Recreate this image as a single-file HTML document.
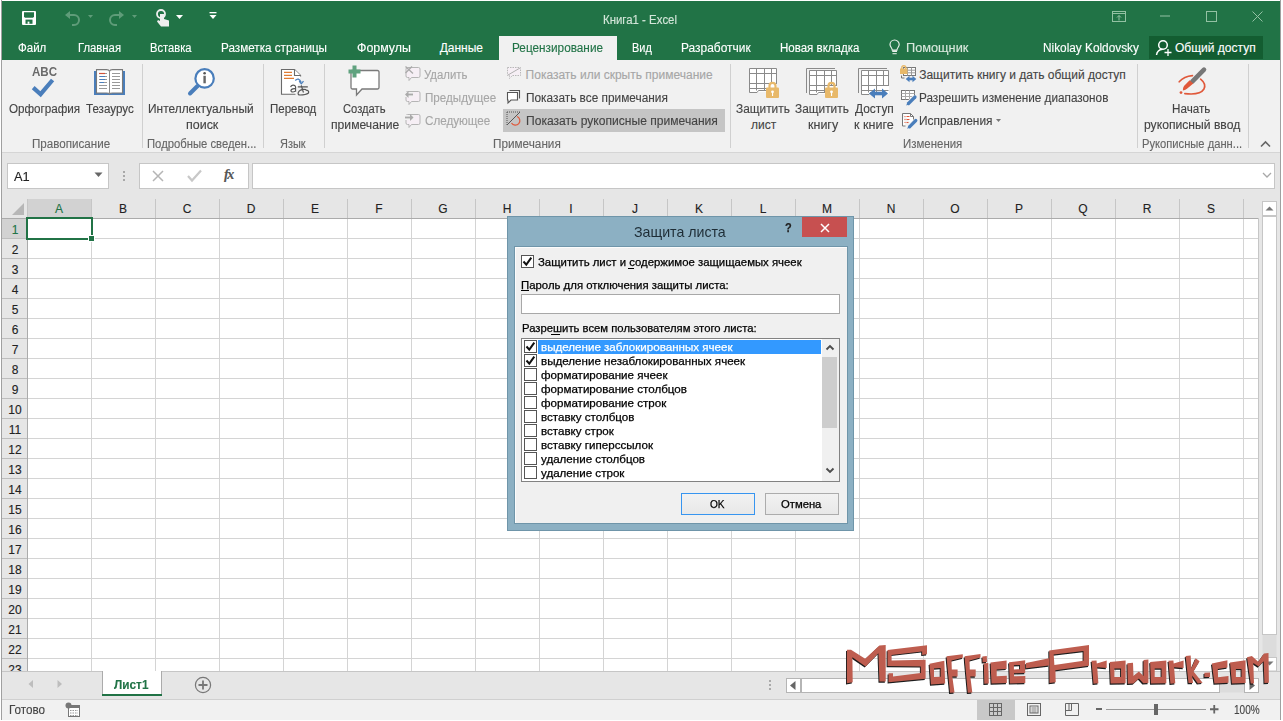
<!DOCTYPE html><html><head><meta charset="utf-8"><style>
html,body{margin:0;padding:0;width:1283px;height:721px;overflow:hidden;background:#fff;}
body{position:relative;font-family:"Liberation Sans",sans-serif;}
.r{position:absolute;}
.t{position:absolute;white-space:nowrap;transform-origin:0 0;-webkit-text-stroke:0.12px currentColor;}
.dlg .t{-webkit-text-stroke:0.25px currentColor;}
svg{position:absolute;overflow:visible;}
</style></head><body>
<div class="r" style="left:0px;top:0px;width:1283px;height:721px;background:#ffffff;"></div>
<div class="r" style="left:1px;top:1px;width:1280px;height:720px;background:#e6e6e6;"></div>
<div class="r" style="left:2px;top:1px;width:1278px;height:59px;background:#217346;"></div>
<div class="r" style="left:499px;top:36px;width:118px;height:24px;background:#f1f1f1;"></div>
<div class="r" style="left:2px;top:60px;width:1278px;height:92px;background:#f1f1f1;"></div>
<div class="r" style="left:2px;top:152px;width:1278px;height:1px;background:#d5d5d5;"></div>
<div class="r" style="left:2px;top:153px;width:1278px;height:46px;background:#e6e6e6;"></div>
<div class="r" style="left:1px;top:0px;width:1px;height:721px;background:#a0a0a0;"></div>
<div class="r" style="left:1280px;top:0px;width:1px;height:721px;background:#a0a0a0;"></div>
<div class="r" style="left:0px;top:720px;width:1283px;height:1px;background:#ffffff;"></div>
<div class="t" id="t0" style="left:602.50px;top:13.94px;font-size:12px;line-height:12px;color:#d3e6d9;transform:scaleX(0.9509);">Книга1 - Excel</div>
<div class="t" id="t1" style="left:18.30px;top:41.84px;font-size:12px;line-height:12px;color:#ffffff;transform:scaleX(0.9587);">Файл</div>
<div class="t" id="t2" style="left:77.50px;top:41.84px;font-size:12px;line-height:12px;color:#ffffff;transform:scaleX(0.9417);">Главная</div>
<div class="t" id="t3" style="left:150.40px;top:41.84px;font-size:12px;line-height:12px;color:#ffffff;transform:scaleX(0.9297);">Вставка</div>
<div class="t" id="t4" style="left:221.40px;top:41.84px;font-size:12px;line-height:12px;color:#ffffff;transform:scaleX(0.9739);">Разметка страницы</div>
<div class="t" id="t5" style="left:356.90px;top:41.84px;font-size:12px;line-height:12px;color:#ffffff;transform:scaleX(1.0326);">Формулы</div>
<div class="t" id="t6" style="left:439.70px;top:41.84px;font-size:12px;line-height:12px;color:#ffffff;">Данные</div>
<div class="t" id="t7" style="left:632.20px;top:41.84px;font-size:12px;line-height:12px;color:#ffffff;transform:scaleX(0.9116);">Вид</div>
<div class="t" id="t8" style="left:681.00px;top:41.84px;font-size:12px;line-height:12px;color:#ffffff;transform:scaleX(0.9946);">Разработчик</div>
<div class="t" id="t9" style="left:780.30px;top:41.84px;font-size:12px;line-height:12px;color:#ffffff;transform:scaleX(0.9596);">Новая вкладка</div>
<div class="t" id="t10" style="left:512.20px;top:41.84px;font-size:12px;line-height:12px;color:#217346;transform:scaleX(0.9823);">Рецензирование</div>
<div class="t" id="t11" style="left:906.40px;top:41.84px;font-size:12px;line-height:12px;color:#d8e8dc;transform:scaleX(1.0623);">Помощник</div>
<div class="t" id="t12" style="left:1042.80px;top:41.84px;font-size:12px;line-height:12px;color:#ffffff;transform:scaleX(0.9848);">Nikolay Koldovsky</div>
<div class="r" style="left:1149px;top:36px;width:114px;height:23px;background:#135d31;"></div>
<div class="t" id="t13" style="left:1175.00px;top:41.84px;font-size:12px;line-height:12px;color:#ffffff;">Общий доступ</div>
<div class="t" id="t14" style="left:8.60px;top:102.84px;font-size:12px;line-height:12px;color:#444444;transform:scaleX(0.9703);">Орфография</div>
<div class="t" id="t15" style="left:85.70px;top:102.84px;font-size:12px;line-height:12px;color:#444444;transform:scaleX(0.9660);">Тезаурус</div>
<div class="t" id="t16" style="left:148.10px;top:102.84px;font-size:12px;line-height:12px;color:#444444;transform:scaleX(0.9932);">Интеллектуальный</div>
<div class="t" id="t17" style="left:185.60px;top:118.84px;font-size:12px;line-height:12px;color:#444444;transform:scaleX(1.0385);">поиск</div>
<div class="t" id="t18" style="left:269.60px;top:102.84px;font-size:12px;line-height:12px;color:#444444;transform:scaleX(0.9586);">Перевод</div>
<div class="t" id="t19" style="left:343.40px;top:102.84px;font-size:12px;line-height:12px;color:#444444;transform:scaleX(0.9320);">Создать</div>
<div class="t" id="t20" style="left:330.70px;top:118.84px;font-size:12px;line-height:12px;color:#444444;transform:scaleX(1.0131);">примечание</div>
<div class="t" id="t21" style="left:736.00px;top:102.84px;font-size:12px;line-height:12px;color:#444444;transform:scaleX(0.9886);">Защитить</div>
<div class="t" id="t22" style="left:751.00px;top:118.84px;font-size:12px;line-height:12px;color:#444444;">лист</div>
<div class="t" id="t23" style="left:794.90px;top:102.84px;font-size:12px;line-height:12px;color:#444444;transform:scaleX(0.9886);">Защитить</div>
<div class="t" id="t24" style="left:807.80px;top:118.84px;font-size:12px;line-height:12px;color:#444444;transform:scaleX(1.0421);">книгу</div>
<div class="t" id="t25" style="left:854.80px;top:102.84px;font-size:12px;line-height:12px;color:#444444;transform:scaleX(0.9933);">Доступ</div>
<div class="t" id="t26" style="left:854.30px;top:118.84px;font-size:12px;line-height:12px;color:#444444;transform:scaleX(1.0453);">к книге</div>
<div class="t" id="t27" style="left:1172.40px;top:102.84px;font-size:12px;line-height:12px;color:#444444;transform:scaleX(0.9701);">Начать</div>
<div class="t" id="t28" style="left:1143.80px;top:118.84px;font-size:12px;line-height:12px;color:#444444;transform:scaleX(1.0116);">рукописный ввод</div>
<div class="t" id="t29" style="left:32.30px;top:137.84px;font-size:12px;line-height:12px;color:#666666;transform:scaleX(0.9683);">Правописание</div>
<div class="t" id="t30" style="left:146.70px;top:137.84px;font-size:12px;line-height:12px;color:#666666;transform:scaleX(0.9402);">Подробные сведен...</div>
<div class="t" id="t31" style="left:280.00px;top:137.84px;font-size:12px;line-height:12px;color:#666666;transform:scaleX(0.9097);">Язык</div>
<div class="t" id="t32" style="left:492.50px;top:137.84px;font-size:12px;line-height:12px;color:#666666;transform:scaleX(0.9784);">Примечания</div>
<div class="t" id="t33" style="left:903.20px;top:137.84px;font-size:12px;line-height:12px;color:#666666;transform:scaleX(0.9540);">Изменения</div>
<div class="t" id="t34" style="left:1141.90px;top:137.84px;font-size:12px;line-height:12px;color:#666666;transform:scaleX(0.9315);">Рукописные данн...</div>
<div class="r" style="left:503px;top:109px;width:222px;height:23px;background:#c5c5c5;"></div>
<div class="t" id="t35" style="left:424.40px;top:68.84px;font-size:12px;line-height:12px;color:#a6a6a6;transform:scaleX(0.9468);">Удалить</div>
<div class="t" id="t36" style="left:424.70px;top:91.84px;font-size:12px;line-height:12px;color:#a6a6a6;transform:scaleX(0.9695);">Предыдущее</div>
<div class="t" id="t37" style="left:424.70px;top:114.84px;font-size:12px;line-height:12px;color:#a6a6a6;transform:scaleX(0.9726);">Следующее</div>
<div class="t" id="t38" style="left:525.60px;top:68.84px;font-size:12px;line-height:12px;color:#a6a6a6;">Показать или скрыть примечание</div>
<div class="t" id="t39" style="left:525.60px;top:91.84px;font-size:12px;line-height:12px;color:#444444;transform:scaleX(0.9864);">Показать все примечания</div>
<div class="t" id="t40" style="left:525.60px;top:114.84px;font-size:12px;line-height:12px;color:#444444;transform:scaleX(1.0070);">Показать рукописные примечания</div>
<div class="t" id="t41" style="left:919.20px;top:68.84px;font-size:12px;line-height:12px;color:#444444;">Защитить книгу и дать общий доступ</div>
<div class="t" id="t42" style="left:919.20px;top:91.84px;font-size:12px;line-height:12px;color:#444444;transform:scaleX(0.9797);">Разрешить изменение диапазонов</div>
<div class="t" id="t43" style="left:919.20px;top:114.84px;font-size:12px;line-height:12px;color:#444444;transform:scaleX(0.9919);">Исправления</div>
<div class="r" style="left:142px;top:64px;width:1px;height:84px;background:#d0d0d0;"></div>
<div class="r" style="left:263px;top:64px;width:1px;height:84px;background:#d0d0d0;"></div>
<div class="r" style="left:324px;top:64px;width:1px;height:84px;background:#d0d0d0;"></div>
<div class="r" style="left:730px;top:64px;width:1px;height:84px;background:#d0d0d0;"></div>
<div class="r" style="left:1137px;top:64px;width:1px;height:84px;background:#d0d0d0;"></div>
<div class="r" style="left:1248px;top:64px;width:1px;height:84px;background:#d0d0d0;"></div>
<div class="r" style="left:7px;top:163px;width:102px;height:26px;background:#ffffff;border:1px solid #c6c6c6;box-sizing:border-box;"></div>
<div class="t" id="t44" style="left:14.30px;top:171.04px;font-size:12px;line-height:12px;color:#222;transform:scaleX(1.0680);">A1</div>
<div class="r" style="left:139px;top:163px;width:110px;height:26px;background:#ffffff;border:1px solid #c6c6c6;box-sizing:border-box;"></div>
<div class="r" style="left:252px;top:163px;width:23px;height:26px;background:#ffffff;border:1px solid #c6c6c6;border-right:none;box-sizing:border-box;"></div>
<div class="r" style="left:252px;top:163px;width:1023px;height:26px;background:#ffffff;border:1px solid #c6c6c6;box-sizing:border-box;"></div>
<div class="r" style="left:2px;top:199px;width:1278px;height:20px;background:#e6e6e6;"></div>
<div class="r" style="left:28px;top:219px;width:1230px;height:452px;background:#ffffff;"></div>
<div class="r" style="left:27px;top:199px;width:65px;height:19px;background:#d2d2d2;"></div>
<div class="r" style="left:2px;top:219px;width:25px;height:19px;background:#d2d2d2;"></div>
<div class="r" style="left:27px;top:219px;width:1px;height:452px;background:#ababab;"></div>
<div class="r" style="left:27px;top:199px;width:1px;height:19px;background:#c6c6c6;"></div>
<div class="r" style="left:91px;top:219px;width:1px;height:452px;background:#d4d4d4;"></div>
<div class="r" style="left:91px;top:199px;width:1px;height:19px;background:#c6c6c6;"></div>
<div class="r" style="left:155px;top:219px;width:1px;height:452px;background:#d4d4d4;"></div>
<div class="r" style="left:155px;top:199px;width:1px;height:19px;background:#c6c6c6;"></div>
<div class="r" style="left:219px;top:219px;width:1px;height:452px;background:#d4d4d4;"></div>
<div class="r" style="left:219px;top:199px;width:1px;height:19px;background:#c6c6c6;"></div>
<div class="r" style="left:283px;top:219px;width:1px;height:452px;background:#d4d4d4;"></div>
<div class="r" style="left:283px;top:199px;width:1px;height:19px;background:#c6c6c6;"></div>
<div class="r" style="left:347px;top:219px;width:1px;height:452px;background:#d4d4d4;"></div>
<div class="r" style="left:347px;top:199px;width:1px;height:19px;background:#c6c6c6;"></div>
<div class="r" style="left:411px;top:219px;width:1px;height:452px;background:#d4d4d4;"></div>
<div class="r" style="left:411px;top:199px;width:1px;height:19px;background:#c6c6c6;"></div>
<div class="r" style="left:475px;top:219px;width:1px;height:452px;background:#d4d4d4;"></div>
<div class="r" style="left:475px;top:199px;width:1px;height:19px;background:#c6c6c6;"></div>
<div class="r" style="left:539px;top:219px;width:1px;height:452px;background:#d4d4d4;"></div>
<div class="r" style="left:539px;top:199px;width:1px;height:19px;background:#c6c6c6;"></div>
<div class="r" style="left:603px;top:219px;width:1px;height:452px;background:#d4d4d4;"></div>
<div class="r" style="left:603px;top:199px;width:1px;height:19px;background:#c6c6c6;"></div>
<div class="r" style="left:667px;top:219px;width:1px;height:452px;background:#d4d4d4;"></div>
<div class="r" style="left:667px;top:199px;width:1px;height:19px;background:#c6c6c6;"></div>
<div class="r" style="left:731px;top:219px;width:1px;height:452px;background:#d4d4d4;"></div>
<div class="r" style="left:731px;top:199px;width:1px;height:19px;background:#c6c6c6;"></div>
<div class="r" style="left:795px;top:219px;width:1px;height:452px;background:#d4d4d4;"></div>
<div class="r" style="left:795px;top:199px;width:1px;height:19px;background:#c6c6c6;"></div>
<div class="r" style="left:859px;top:219px;width:1px;height:452px;background:#d4d4d4;"></div>
<div class="r" style="left:859px;top:199px;width:1px;height:19px;background:#c6c6c6;"></div>
<div class="r" style="left:923px;top:219px;width:1px;height:452px;background:#d4d4d4;"></div>
<div class="r" style="left:923px;top:199px;width:1px;height:19px;background:#c6c6c6;"></div>
<div class="r" style="left:987px;top:219px;width:1px;height:452px;background:#d4d4d4;"></div>
<div class="r" style="left:987px;top:199px;width:1px;height:19px;background:#c6c6c6;"></div>
<div class="r" style="left:1051px;top:219px;width:1px;height:452px;background:#d4d4d4;"></div>
<div class="r" style="left:1051px;top:199px;width:1px;height:19px;background:#c6c6c6;"></div>
<div class="r" style="left:1115px;top:219px;width:1px;height:452px;background:#d4d4d4;"></div>
<div class="r" style="left:1115px;top:199px;width:1px;height:19px;background:#c6c6c6;"></div>
<div class="r" style="left:1179px;top:219px;width:1px;height:452px;background:#d4d4d4;"></div>
<div class="r" style="left:1179px;top:199px;width:1px;height:19px;background:#c6c6c6;"></div>
<div class="r" style="left:1243px;top:219px;width:1px;height:452px;background:#d4d4d4;"></div>
<div class="r" style="left:1243px;top:199px;width:1px;height:19px;background:#c6c6c6;"></div>
<div class="r" style="left:28px;top:238px;width:1230px;height:1px;background:#d4d4d4;"></div>
<div class="r" style="left:2px;top:238px;width:25px;height:1px;background:#bdbdbd;"></div>
<div class="r" style="left:28px;top:258px;width:1230px;height:1px;background:#d4d4d4;"></div>
<div class="r" style="left:2px;top:258px;width:25px;height:1px;background:#bdbdbd;"></div>
<div class="r" style="left:28px;top:278px;width:1230px;height:1px;background:#d4d4d4;"></div>
<div class="r" style="left:2px;top:278px;width:25px;height:1px;background:#bdbdbd;"></div>
<div class="r" style="left:28px;top:298px;width:1230px;height:1px;background:#d4d4d4;"></div>
<div class="r" style="left:2px;top:298px;width:25px;height:1px;background:#bdbdbd;"></div>
<div class="r" style="left:28px;top:318px;width:1230px;height:1px;background:#d4d4d4;"></div>
<div class="r" style="left:2px;top:318px;width:25px;height:1px;background:#bdbdbd;"></div>
<div class="r" style="left:28px;top:338px;width:1230px;height:1px;background:#d4d4d4;"></div>
<div class="r" style="left:2px;top:338px;width:25px;height:1px;background:#bdbdbd;"></div>
<div class="r" style="left:28px;top:358px;width:1230px;height:1px;background:#d4d4d4;"></div>
<div class="r" style="left:2px;top:358px;width:25px;height:1px;background:#bdbdbd;"></div>
<div class="r" style="left:28px;top:378px;width:1230px;height:1px;background:#d4d4d4;"></div>
<div class="r" style="left:2px;top:378px;width:25px;height:1px;background:#bdbdbd;"></div>
<div class="r" style="left:28px;top:398px;width:1230px;height:1px;background:#d4d4d4;"></div>
<div class="r" style="left:2px;top:398px;width:25px;height:1px;background:#bdbdbd;"></div>
<div class="r" style="left:28px;top:418px;width:1230px;height:1px;background:#d4d4d4;"></div>
<div class="r" style="left:2px;top:418px;width:25px;height:1px;background:#bdbdbd;"></div>
<div class="r" style="left:28px;top:438px;width:1230px;height:1px;background:#d4d4d4;"></div>
<div class="r" style="left:2px;top:438px;width:25px;height:1px;background:#bdbdbd;"></div>
<div class="r" style="left:28px;top:458px;width:1230px;height:1px;background:#d4d4d4;"></div>
<div class="r" style="left:2px;top:458px;width:25px;height:1px;background:#bdbdbd;"></div>
<div class="r" style="left:28px;top:478px;width:1230px;height:1px;background:#d4d4d4;"></div>
<div class="r" style="left:2px;top:478px;width:25px;height:1px;background:#bdbdbd;"></div>
<div class="r" style="left:28px;top:498px;width:1230px;height:1px;background:#d4d4d4;"></div>
<div class="r" style="left:2px;top:498px;width:25px;height:1px;background:#bdbdbd;"></div>
<div class="r" style="left:28px;top:518px;width:1230px;height:1px;background:#d4d4d4;"></div>
<div class="r" style="left:2px;top:518px;width:25px;height:1px;background:#bdbdbd;"></div>
<div class="r" style="left:28px;top:538px;width:1230px;height:1px;background:#d4d4d4;"></div>
<div class="r" style="left:2px;top:538px;width:25px;height:1px;background:#bdbdbd;"></div>
<div class="r" style="left:28px;top:558px;width:1230px;height:1px;background:#d4d4d4;"></div>
<div class="r" style="left:2px;top:558px;width:25px;height:1px;background:#bdbdbd;"></div>
<div class="r" style="left:28px;top:578px;width:1230px;height:1px;background:#d4d4d4;"></div>
<div class="r" style="left:2px;top:578px;width:25px;height:1px;background:#bdbdbd;"></div>
<div class="r" style="left:28px;top:598px;width:1230px;height:1px;background:#d4d4d4;"></div>
<div class="r" style="left:2px;top:598px;width:25px;height:1px;background:#bdbdbd;"></div>
<div class="r" style="left:28px;top:618px;width:1230px;height:1px;background:#d4d4d4;"></div>
<div class="r" style="left:2px;top:618px;width:25px;height:1px;background:#bdbdbd;"></div>
<div class="r" style="left:28px;top:638px;width:1230px;height:1px;background:#d4d4d4;"></div>
<div class="r" style="left:2px;top:638px;width:25px;height:1px;background:#bdbdbd;"></div>
<div class="r" style="left:28px;top:658px;width:1230px;height:1px;background:#d4d4d4;"></div>
<div class="r" style="left:2px;top:658px;width:25px;height:1px;background:#bdbdbd;"></div>
<div class="r" style="left:2px;top:218px;width:1256px;height:1px;background:#ababab;"></div>
<div class="r" style="left:1258px;top:218px;width:1px;height:453px;background:#c6c6c6;"></div>
<div class="t" id="t45" style="left:54.98px;top:202.84px;font-size:12px;line-height:12px;color:#217346;">A</div>
<div class="t" id="t46" style="left:119.01px;top:202.84px;font-size:12px;line-height:12px;color:#222;">B</div>
<div class="t" id="t47" style="left:182.68px;top:202.84px;font-size:12px;line-height:12px;color:#222;">C</div>
<div class="t" id="t48" style="left:246.68px;top:202.84px;font-size:12px;line-height:12px;color:#222;">D</div>
<div class="t" id="t49" style="left:311.01px;top:202.84px;font-size:12px;line-height:12px;color:#222;">E</div>
<div class="t" id="t50" style="left:375.34px;top:202.84px;font-size:12px;line-height:12px;color:#222;">F</div>
<div class="t" id="t51" style="left:438.32px;top:202.84px;font-size:12px;line-height:12px;color:#222;">G</div>
<div class="t" id="t52" style="left:502.68px;top:202.84px;font-size:12px;line-height:12px;color:#222;">H</div>
<div class="t" id="t53" style="left:569.32px;top:202.84px;font-size:12px;line-height:12px;color:#222;">I</div>
<div class="t" id="t54" style="left:632.00px;top:202.84px;font-size:12px;line-height:12px;color:#222;">J</div>
<div class="t" id="t55" style="left:695.01px;top:202.84px;font-size:12px;line-height:12px;color:#222;">K</div>
<div class="t" id="t56" style="left:759.67px;top:202.84px;font-size:12px;line-height:12px;color:#222;">L</div>
<div class="t" id="t57" style="left:821.99px;top:202.84px;font-size:12px;line-height:12px;color:#222;">M</div>
<div class="t" id="t58" style="left:886.68px;top:202.84px;font-size:12px;line-height:12px;color:#222;">N</div>
<div class="t" id="t59" style="left:950.32px;top:202.84px;font-size:12px;line-height:12px;color:#222;">O</div>
<div class="t" id="t60" style="left:1015.01px;top:202.84px;font-size:12px;line-height:12px;color:#222;">P</div>
<div class="t" id="t61" style="left:1078.32px;top:202.84px;font-size:12px;line-height:12px;color:#222;">Q</div>
<div class="t" id="t62" style="left:1142.68px;top:202.84px;font-size:12px;line-height:12px;color:#222;">R</div>
<div class="t" id="t63" style="left:1207.01px;top:202.84px;font-size:12px;line-height:12px;color:#222;">S</div>
<div class="t" id="t64" style="left:11.67px;top:223.59px;font-size:12px;line-height:12px;color:#217346;">1</div>
<div class="t" id="t65" style="left:11.67px;top:243.59px;font-size:12px;line-height:12px;color:#222;">2</div>
<div class="t" id="t66" style="left:11.67px;top:263.59px;font-size:12px;line-height:12px;color:#222;">3</div>
<div class="t" id="t67" style="left:11.67px;top:283.59px;font-size:12px;line-height:12px;color:#222;">4</div>
<div class="t" id="t68" style="left:11.67px;top:303.59px;font-size:12px;line-height:12px;color:#222;">5</div>
<div class="t" id="t69" style="left:11.67px;top:323.59px;font-size:12px;line-height:12px;color:#222;">6</div>
<div class="t" id="t70" style="left:11.67px;top:343.59px;font-size:12px;line-height:12px;color:#222;">7</div>
<div class="t" id="t71" style="left:11.67px;top:363.59px;font-size:12px;line-height:12px;color:#222;">8</div>
<div class="t" id="t72" style="left:11.67px;top:383.59px;font-size:12px;line-height:12px;color:#222;">9</div>
<div class="t" id="t73" style="left:8.34px;top:403.59px;font-size:12px;line-height:12px;color:#222;">10</div>
<div class="t" id="t74" style="left:8.76px;top:423.59px;font-size:12px;line-height:12px;color:#222;">11</div>
<div class="t" id="t75" style="left:8.34px;top:443.59px;font-size:12px;line-height:12px;color:#222;">12</div>
<div class="t" id="t76" style="left:8.34px;top:463.59px;font-size:12px;line-height:12px;color:#222;">13</div>
<div class="t" id="t77" style="left:8.34px;top:483.59px;font-size:12px;line-height:12px;color:#222;">14</div>
<div class="t" id="t78" style="left:8.34px;top:503.59px;font-size:12px;line-height:12px;color:#222;">15</div>
<div class="t" id="t79" style="left:8.34px;top:523.59px;font-size:12px;line-height:12px;color:#222;">16</div>
<div class="t" id="t80" style="left:8.34px;top:543.59px;font-size:12px;line-height:12px;color:#222;">17</div>
<div class="t" id="t81" style="left:8.34px;top:563.59px;font-size:12px;line-height:12px;color:#222;">18</div>
<div class="t" id="t82" style="left:8.34px;top:583.59px;font-size:12px;line-height:12px;color:#222;">19</div>
<div class="t" id="t83" style="left:8.34px;top:603.59px;font-size:12px;line-height:12px;color:#222;">20</div>
<div class="t" id="t84" style="left:8.34px;top:623.59px;font-size:12px;line-height:12px;color:#222;">21</div>
<div class="t" id="t85" style="left:8.34px;top:643.59px;font-size:12px;line-height:12px;color:#222;">22</div>
<div class="t" id="t86" style="left:8.34px;top:663.59px;font-size:12px;line-height:12px;color:#222;">23</div>
<div class="r" style="left:26px;top:217px;width:67px;height:23px;background:transparent;border:2px solid #217346;box-sizing:border-box;"></div>
<div class="r" style="left:89px;top:236px;width:5px;height:5px;background:#217346;border:1px solid #fff;box-sizing:content-box;left:88px;top:235px;"></div>
<div class="r" style="left:2px;top:671px;width:1278px;height:28px;background:#e6e6e6;"></div>
<div class="r" style="left:2px;top:671px;width:1278px;height:1px;background:#c6c6c6;"></div>
<div class="r" style="left:102px;top:671px;width:60px;height:25px;background:#ffffff;border-left:1px solid #ababab;border-right:1px solid #ababab;box-sizing:border-box;"></div>
<div class="r" style="left:102px;top:694px;width:60px;height:2px;background:#217346;"></div>
<div class="t" id="t87" style="left:114.00px;top:678.64px;font-size:12px;line-height:12px;color:#217346;font-weight:700;transform:scaleX(0.9846);">Лист1</div>
<div class="r" style="left:2px;top:699px;width:1278px;height:1px;background:#d0d0d0;"></div>
<div class="r" style="left:2px;top:700px;width:1278px;height:20px;background:#f1f1f1;"></div>
<div class="t" id="t88" style="left:9.40px;top:704.34px;font-size:12px;line-height:12px;color:#444;transform:scaleX(0.9736);">Готово</div>
<div class="t" id="t89" style="left:1234.00px;top:703.64px;font-size:12px;line-height:12px;color:#444;transform:scaleX(0.8366);">100%</div>
<div class="r" style="left:977px;top:700px;width:38px;height:20px;background:#c8c8c8;"></div>
<svg style="left:22px;top:11px" width="14" height="14" viewBox="0 0 14 14"><rect x="0" y="0" width="14" height="14" rx="1" fill="#fff"/><path d="M2 1.2 H12 V5.8 L11 6.8 H3 L2 5.8Z" fill="#217346"/><rect x="3.5" y="8.6" width="7" height="4.2" fill="#217346"/><rect x="5.6" y="10.6" width="1.8" height="2.2" fill="#fff"/></svg>
<svg style="left:64px;top:10px" width="18" height="16" viewBox="0 0 18 16"><path d="M3 5 h7 a5 5 0 0 1 0 10 h-2" fill="none" stroke="#5f9c79" stroke-width="2"/><path d="M1 5 l5 -4 v8z" fill="#5f9c79"/></svg>
<svg style="left:88px;top:15px" width="6" height="4" viewBox="0 0 6 4"><path d="M0 0h5l-2.5 3z" fill="#5f9c79"/></svg>
<svg style="left:107px;top:10px" width="18" height="16" viewBox="0 0 18 16"><path d="M15 5 h-7 a5 5 0 0 0 0 10 h2" fill="none" stroke="#5f9c79" stroke-width="2"/><path d="M17 5 l-5 -4 v8z" fill="#5f9c79"/></svg>
<svg style="left:132px;top:15px" width="6" height="4" viewBox="0 0 6 4"><path d="M0 0h5l-2.5 3z" fill="#5f9c79"/></svg>
<svg style="left:156px;top:9px" width="14" height="18" viewBox="0 0 14 18"><circle cx="5" cy="5" r="4" fill="none" stroke="#eee" stroke-width="1.8"/><path d="M4 5 v7 l-2 -1 l-1 1.5 l4 5 h8 v-6 l-5 -1.5 v-5z" fill="#eee"/></svg>
<svg style="left:176px;top:15px" width="8" height="5" viewBox="0 0 8 5"><path d="M0 0h7l-3.5 4z" fill="#fff"/></svg>
<svg style="left:209px;top:11px" width="9" height="9" viewBox="0 0 9 9"><rect x="0.5" y="1" width="7" height="1.3" fill="#fff"/><path d="M0.5 4h7l-3.5 4z" fill="#fff"/></svg>
<svg style="left:1112px;top:11px" width="14" height="11" viewBox="0 0 14 11"><rect x="0.5" y="0.5" width="13" height="10" fill="none" stroke="#93c1a3"/><path d="M0.5 2.5h13" stroke="#93c1a3"/><path d="M7 9.5v-5 M5 6.5l2-2 2 2" fill="none" stroke="#93c1a3"/></svg>
<svg style="left:1160px;top:15px" width="11" height="2" viewBox="0 0 11 2"><rect x="0" y="0.5" width="10" height="1" fill="#93c1a3"/></svg>
<svg style="left:1206px;top:11px" width="11" height="11" viewBox="0 0 11 11"><rect x="0.5" y="0.5" width="10" height="10" fill="none" stroke="#93c1a3"/></svg>
<svg style="left:1252px;top:11px" width="11" height="11" viewBox="0 0 11 11"><path d="M0.5 0.5l10 10 M10.5 0.5l-10 10" stroke="#93c1a3" stroke-width="1"/></svg>
<svg style="left:888px;top:39px" width="14" height="17" viewBox="0 0 14 17"><path d="M4.3 11.2 C4.3 9.2 2 7.8 2 5.6 A4.6 4.6 0 0 1 11.2 5.6 C11.2 7.8 8.9 9.2 8.9 11.2 Z" fill="none" stroke="#e8f0ea" stroke-width="1.2"/><rect x="4.2" y="11.4" width="4.8" height="1.6" fill="#e8f0ea"/><rect x="4.5" y="14.2" width="4.2" height="1" fill="#e8f0ea"/></svg>
<svg style="left:1154px;top:38px" width="18" height="18" viewBox="0 0 18 18"><circle cx="9" cy="7" r="4.3" fill="none" stroke="#fff" stroke-width="1.5"/><path d="M2.5 17 C3 13.5 5.5 11.5 8.5 11.2" fill="none" stroke="#fff" stroke-width="1.5"/><path d="M10.5 14.5h7 M14 11v7" stroke="#fff" stroke-width="1.3"/></svg>
<div class="t" style="left:31.5px;top:67px;font-size:12.2px;line-height:11px;font-weight:700;color:#6a6a6a;transform:scaleX(0.95);-webkit-text-stroke:0">ABC</div>
<svg style="left:30px;top:77px" width="26" height="22" viewBox="0 0 26 22"><path d="M3.2 10.6 L10.6 17.2 L22.6 3" fill="none" stroke="#4a7ebb" stroke-width="4.2"/></svg>
<svg style="left:94px;top:69px" width="31" height="26" viewBox="0 0 31 26"><rect x="0" y="2" width="31" height="24" fill="#4a7ebb"/><path d="M2.5 0.6 h10 q2.5 0 3 1.8 q0.5 -1.8 3 -1.8 h10 v23.4 h-10 q-2.5 0 -3 1 q-0.5 -1 -3 -1 h-10z" fill="#fff" stroke="#7a7a7a" stroke-width="1.1"/><path d="M15.5 2v22" stroke="#8a8a8a"/><path d="M5 4.5h8" stroke="#999" stroke-width="1"/><path d="M5 7.5h8" stroke="#999" stroke-width="1"/><path d="M5 10.5h8" stroke="#999" stroke-width="1"/><path d="M5 13.5h8" stroke="#999" stroke-width="1"/><path d="M5 16.5h8" stroke="#999" stroke-width="1"/><path d="M5 19.5h8" stroke="#999" stroke-width="1"/><path d="M18 4.5h8" stroke="#999" stroke-width="1"/><path d="M18 7.5h8" stroke="#999" stroke-width="1"/><path d="M18 10.5h8" stroke="#999" stroke-width="1"/><path d="M18 13.5h8" stroke="#999" stroke-width="1"/><path d="M18 16.5h8" stroke="#999" stroke-width="1"/><path d="M18 19.5h8" stroke="#999" stroke-width="1"/><path d="M5 4.5h6" stroke="#d0533a" stroke-width="1.2"/><path d="M6 7.5h5 M6 10.5h5 M6 13.5h4" stroke="#4a7ebb" stroke-width="1.2"/></svg>
<svg style="left:186px;top:67px" width="30" height="30" viewBox="0 0 30 30"><circle cx="18.6" cy="11.4" r="9.2" fill="#fff" stroke="#4a7ebb" stroke-width="2.2"/><path d="M4 26.5 L11.5 19" stroke="#4a7ebb" stroke-width="4" stroke-linecap="round"/><circle cx="18.6" cy="6.3" r="1.3" fill="#555"/><rect x="17.4" y="8.8" width="2.4" height="7.5" fill="#666"/></svg>
<svg style="left:278px;top:66px" width="34" height="34" viewBox="0 0 34 34"><path d="M17.5 28.3 H3.5 V3.5 H16.5 L22.6 9.5 V10.5" fill="#fff" stroke="#6a6a6a" stroke-width="1.1"/><path d="M16.5 3.5 V9.5 H22.6" fill="#fff" stroke="#6a6a6a" stroke-width="1.1"/><path d="M6 6.4h8 M6 9.4h8 M6 12.4h10" stroke="#e07b32" stroke-width="1.2"/><path d="M17.3 14.5 Q20.5 10.8 23.3 16.5" fill="none" stroke="#4a7ebb" stroke-width="1.3"/><path d="M21.2 15.2 L23.3 17.8 L25.5 15.2" fill="none" stroke="#4a7ebb" stroke-width="1.3"/><path d="M17.6 20.8 a2.6 2.6 0 0 0 -5 0.3 M17.6 20.8 V25.8 M17.6 22.8 q-2 -0.5 -3.5 0.3 q-1.8 1 -0.8 2.4 q1.6 1.2 4.3 -0.5" fill="none" stroke="#555" stroke-width="1.2"/><path d="M19.8 20.8 H29.8 M23.3 19.3 Q24.5 24 25.5 26.5 M28 23.5 Q22 22.5 20.3 26.5 Q19.5 29 22 29 Q28 29 30.5 27 Q31.5 24.5 27.5 23.8" fill="none" stroke="#555" stroke-width="1.2"/></svg>
<svg style="left:348px;top:65px" width="33" height="32" viewBox="0 0 33 32"><path d="M3.5 5.5h26a1.5 1.5 0 0 1 1.5 1.5v15.5a1.5 1.5 0 0 1-1.5 1.5h-15.5l-5.5 6v-6h-4a1.5 1.5 0 0 1-1.5-1.5v-15.5a1.5 1.5 0 0 1 1.5-1.5z" fill="#fff" stroke="#7a7a7a" stroke-width="1.3"/><rect x="0.5" y="4.5" width="12" height="4" fill="#60a27f"/><rect x="4.5" y="0.5" width="4" height="12" fill="#60a27f"/></svg>
<svg style="left:405px;top:66px" width="17" height="17" viewBox="0 0 17 17"><path d="M2.5 1.5h11a1.5 1.5 0 0 1 1.5 1.5v7a1.5 1.5 0 0 1 -1.5 1.5h-7l-2.5 3v-3h-1.5a1.5 1.5 0 0 1 -1.5 -1.5v-7a1.5 1.5 0 0 1 1.5 -1.5z" fill="#f6eff5" stroke="#b5b5b5" stroke-width="1"/><path d="M0.5 0.5l7.5 7 M7 0.5l-6.5 6.5" stroke="#aaa" stroke-width="1.3"/></svg>
<svg style="left:405px;top:90px" width="17" height="17" viewBox="0 0 17 17"><path d="M2.5 1.5h11a1.5 1.5 0 0 1 1.5 1.5v7a1.5 1.5 0 0 1 -1.5 1.5h-7l-2.5 3v-3h-1.5a1.5 1.5 0 0 1 -1.5 -1.5v-7a1.5 1.5 0 0 1 1.5 -1.5z" fill="#f6eff5" stroke="#b5b5b5" stroke-width="1"/><rect x="0" y="2" width="8" height="5" fill="#f1f1f1"/><path d="M1.5 4.5h6.5" stroke="#aaa" stroke-width="1.8"/><path d="M0 4.5l3.5-3.5v7z" fill="#aaa"/></svg>
<svg style="left:405px;top:113px" width="17" height="17" viewBox="0 0 17 17"><path d="M2.5 1.5h11a1.5 1.5 0 0 1 1.5 1.5v7a1.5 1.5 0 0 1 -1.5 1.5h-7l-2.5 3v-3h-1.5a1.5 1.5 0 0 1 -1.5 -1.5v-7a1.5 1.5 0 0 1 1.5 -1.5z" fill="#f6eff5" stroke="#b5b5b5" stroke-width="1"/><rect x="0" y="2" width="9" height="5" fill="#f1f1f1"/><path d="M0 4.5h6" stroke="#aaa" stroke-width="1.8"/><path d="M8.5 4.5l-3.5-3.5v7z" fill="#aaa"/></svg>
<svg style="left:506px;top:66px" width="16" height="15" viewBox="0 0 16 15"><path d="M1.5 1.5h13v8h-8l-3 3v-3h-2z" fill="#f6eff5" stroke="#b8b8b8" stroke-dasharray="1.5 1"/><path d="M2 9l12 -7" stroke="#b0b0b0"/></svg>
<svg style="left:506px;top:88px" width="16" height="16" viewBox="0 0 16 16"><path d="M1.5 4.5h10v7.5h-6.5l-3 3v-3h-0.5z" fill="#fff" stroke="#555" stroke-width="1.1"/><path d="M3.5 2.5h10v8" fill="none" stroke="#555" stroke-width="1.1"/></svg>
<svg style="left:506px;top:111px" width="17" height="17" viewBox="0 0 17 17"><path d="M1 1h13 M1 1v13" stroke="#555" stroke-width="1" stroke-dasharray="1 1"/><path d="M1 14 L14 1" stroke="#555" stroke-width="1"/><path d="M11 5.5 a4.5 4.5 0 1 1 -5.5 6.5" fill="none" stroke="#e0583a" stroke-width="1.2"/></svg>
<svg style="left:749px;top:68px" width="32" height="32" viewBox="0 0 32 32"><rect x="1" y="1" width="27" height="23" fill="#fff"/><path d="M0.5 24.5 V0.5 H27.5 V16 M0.5 24.5 H8 L9.5 22.5 H18" fill="none" stroke="#8a8a8a"/><path d="M0.5 5.5H27.5 M0.5 15.5H27.5 M0.5 20.5H18 M7.5 0.5V22.5 M15.5 0.5V22.5 M22.5 0.5V15" stroke="#8a8a8a"/><g transform="translate(17,14)"><path d="M3.5 6 v-2.2 a3 3 0 0 1 6 0 v2.2" fill="none" stroke="#e8b96a" stroke-width="2.2"/><rect x="0" y="5.5" width="13" height="10.5" rx="1" fill="#e8b96a"/><circle cx="6.5" cy="9.8" r="1.4" fill="#fff"/><rect x="6" y="10" width="1.1" height="4" fill="#fff"/></g></svg>
<svg style="left:806px;top:68px" width="34" height="32" viewBox="0 0 34 32"><path d="M0.5 25 V0.5 H29" fill="none" stroke="#8a8a8a"/><g transform="translate(3,2)"><rect x="1" y="1" width="27" height="23" fill="#fff"/><path d="M0.5 24.5 V0.5 H27.5 V16 M0.5 24.5 H8 L9.5 22.5 H18" fill="none" stroke="#8a8a8a"/><path d="M0.5 5.5H27.5 M0.5 15.5H27.5 M0.5 20.5H27.5 M7.5 0.5V22.5 M15.5 0.5V22.5 M22.5 0.5V15" stroke="#8a8a8a"/></g><g transform="translate(19,14)"><path d="M3.5 6 v-2.2 a3 3 0 0 1 6 0 v2.2" fill="none" stroke="#e8b96a" stroke-width="2.2"/><rect x="0" y="5.5" width="13" height="10.5" rx="1" fill="#e8b96a"/><circle cx="6.5" cy="9.8" r="1.4" fill="#fff"/><rect x="6" y="10" width="1.1" height="4" fill="#fff"/></g></svg>
<svg style="left:858px;top:68px" width="34" height="32" viewBox="0 0 34 32"><path d="M0.5 25 V0.5 H29" fill="none" stroke="#8a8a8a"/><g transform="translate(3,2)"><rect x="1" y="1" width="27" height="23" fill="#fff"/><path d="M0.5 24.5 V0.5 H27.5 V16 M0.5 24.5 H8 L9.5 22.5 H18" fill="none" stroke="#8a8a8a"/><path d="M0.5 5.5H27.5 M0.5 15.5H27.5 M0.5 20.5H27.5 M7.5 0.5V22.5 M15.5 0.5V22.5 M22.5 0.5V15" stroke="#8a8a8a"/></g><path d="M15 25.5h11" stroke="#4a7ebb" stroke-width="3.6"/><path d="M17 20.5 l-6 5 6 5z M24 20.5 l6 5 -6 5z" fill="#4a7ebb"/></svg>
<svg style="left:899px;top:65px" width="19" height="19" viewBox="0 0 19 19"><rect x="4.5" y="2.5" width="12" height="8" fill="#fff" stroke="#777"/><path d="M4.5 5.2h12 M4.5 7.8h12 M8.5 2.5v8 M12.5 2.5v8" stroke="#999"/><path d="M2.8 4 v-1.2 a2 2 0 0 1 4 0 v1.2" fill="none" stroke="#e8b96a" stroke-width="1.4"/><rect x="1" y="3.5" width="7.5" height="5.5" fill="#e8b96a"/><path d="M2.5 10.5v2.5h3" fill="none" stroke="#777"/><path d="M9 14h6" stroke="#4a7ebb" stroke-width="2.6"/><path d="M10.5 10.8l-3.8 3.2 3.8 3.2z M13.5 10.8l3.8 3.2-3.8 3.2z" fill="#4a7ebb"/></svg>
<svg style="left:899px;top:88px" width="19" height="19" viewBox="0 0 19 19"><rect x="2.5" y="2.5" width="13" height="9" fill="#fff" stroke="#777"/><path d="M2.5 5.5h13 M2.5 8.5h13 M6.5 2.5v9 M10.5 2.5v9" stroke="#aaa"/><path d="M16.5 8.5 L8.5 16.5" stroke="#f1f1f1" stroke-width="5"/><path d="M16 9 L9.5 15.5" stroke="#4a7ebb" stroke-width="3.2" stroke-linecap="round"/><path d="M9 14 L7 17.5 L10.8 16z" fill="#4a7ebb"/></svg>
<svg style="left:899px;top:111px" width="19" height="19" viewBox="0 0 19 19"><path d="M3.5 2.5h8l3 3v9.5 M3.5 2.5v12.5h3" fill="#fff" stroke="#777"/><path d="M11.5 2.5v3h3" fill="none" stroke="#777"/><path d="M5.5 5.5h1 M7.5 5.5h3 M5.5 8.5h1 M7.5 8.5h3 M5.5 11.5h1 M7.5 11.5h2" stroke="#e0583a" stroke-width="1"/><path d="M17.5 9 L9 17.5" stroke="#f1f1f1" stroke-width="5"/><path d="M16.8 9.5 L10.5 15.8" stroke="#4a7ebb" stroke-width="3.2" stroke-linecap="round"/><path d="M10 14.3 L8 17.8 L11.8 16.3z" fill="#4a7ebb"/></svg>
<svg style="left:996px;top:119px" width="6" height="4" viewBox="0 0 6 4"><path d="M0 0h5l-2.5 3z" fill="#777"/></svg>
<svg style="left:1172px;top:62px" width="40" height="40" viewBox="0 0 40 40"><path d="M7.2 19.8 Q12 14.2 20.5 13.6" fill="none" stroke="#e0583a" stroke-width="1.6" stroke-linecap="round"/><path d="M28.6 17.2 Q34.5 22 32 27 Q28 33.5 12.8 31.6" fill="none" stroke="#e0583a" stroke-width="1.6" stroke-linecap="round"/><path d="M32 7.6 L20.2 19.6" stroke="#777" stroke-width="4.6" stroke-linecap="round"/><path d="M21.3 21.6 L17.6 18.2 L12 24 Q10.5 26.5 10.8 28.4 Q13 28.3 15 26.8z" fill="#e0583a"/><circle cx="9" cy="30.6" r="1.4" fill="#e0583a"/></svg>
<svg style="left:1260px;top:140px" width="11" height="8" viewBox="0 0 11 8"><path d="M1 6.5l4.5-4.5 4.5 4.5" fill="none" stroke="#666" stroke-width="1.6"/></svg>
<svg style="left:94px;top:172px" width="9" height="6" viewBox="0 0 9 6"><path d="M0.5 0.5h8l-4 4.5z" fill="#666"/></svg>
<svg style="left:123px;top:170px" width="3" height="12" viewBox="0 0 3 12"><rect x="0" y="1" width="2" height="2" fill="#a8a8a8"/><rect x="0" y="5" width="2" height="2" fill="#a8a8a8"/><rect x="0" y="9" width="2" height="2" fill="#a8a8a8"/></svg>
<svg style="left:152px;top:170px" width="12" height="12" viewBox="0 0 12 12"><path d="M1 1l10 10 M11 1l-10 10" stroke="#b5b5b5" stroke-width="1.5"/></svg>
<svg style="left:187px;top:169px" width="15" height="13" viewBox="0 0 15 13"><path d="M1 7l4 4.5 9-10" fill="none" stroke="#c8c8c8" stroke-width="2.2"/></svg>
<div class="t" style="left:224px;top:168px;font-size:14px;line-height:14px;font-family:'Liberation Serif';font-style:italic;font-weight:700;color:#555;letter-spacing:-1.5px">fx</div>
<svg style="left:1262px;top:172px" width="10" height="7" viewBox="0 0 10 7"><path d="M1 1l4 4 4-4" fill="none" stroke="#a8a8a8" stroke-width="1.3"/></svg>
<svg style="left:12px;top:203px" width="12" height="12" viewBox="0 0 12 12"><path d="M12 0v12h-12z" fill="#b7b7b7"/></svg>
<svg style="left:1262px;top:201px" width="15" height="471" viewBox="0 0 15 471"><rect x="0.5" y="0.5" width="14" height="14" fill="#fff" stroke="#c6c6c6"/><path d="M3.5 9.5h8l-4-4z" fill="#777"/><rect x="0.5" y="15.5" width="14" height="418" fill="#fff" stroke="#c6c6c6"/><rect x="0.5" y="434" width="14" height="22" fill="#dcdcdc"/><rect x="0.5" y="456.5" width="14" height="13.5" fill="#fff" stroke="#c6c6c6"/><path d="M3.5 460.5h8l-4 4z" fill="#777"/></svg>
<svg style="left:28px;top:680px" width="6" height="9" viewBox="0 0 6 9"><path d="M5 0v8l-4.5-4z" fill="#bdbdbd"/></svg>
<svg style="left:57px;top:680px" width="6" height="9" viewBox="0 0 6 9"><path d="M0.5 0v8l4.5-4z" fill="#bdbdbd"/></svg>
<svg style="left:194px;top:676px" width="18" height="18" viewBox="0 0 18 18"><circle cx="9" cy="9" r="7.6" fill="none" stroke="#777" stroke-width="1.2"/><path d="M9 4.5v9 M4.5 9h9" stroke="#777" stroke-width="1.8"/></svg>
<svg style="left:769px;top:680px" width="3" height="11" viewBox="0 0 3 11"><rect x="0" y="0" width="2" height="2" fill="#aaa"/><rect x="0" y="4" width="2" height="2" fill="#aaa"/><rect x="0" y="8" width="2" height="2" fill="#aaa"/></svg>
<svg style="left:786px;top:678px" width="474" height="15" viewBox="0 0 474 15"><rect x="0.5" y="0.5" width="14" height="14" fill="#fff" stroke="#b5b5b5"/><path d="M9.5 3v9l-5.5-4.5z" fill="#666"/><rect x="15.5" y="0.5" width="418" height="14" fill="#fff" stroke="#b5b5b5"/><rect x="434" y="0.5" width="24" height="14" fill="#dcdcdc"/><rect x="458.5" y="0.5" width="14" height="14" fill="#fff" stroke="#b5b5b5"/><path d="M463.5 3v9l5.5-4.5z" fill="#666"/></svg>
<svg style="left:65px;top:702px" width="16" height="16" viewBox="0 0 16 16"><rect x="3.5" y="3.5" width="11" height="11" fill="#fff" stroke="#777"/><rect x="3.5" y="3.5" width="11" height="2.5" fill="#777"/><path d="M5 8.5h8 M5 11h8 M5 13.5h8" stroke="#999" stroke-dasharray="1.5 1"/><circle cx="3.5" cy="3.5" r="3" fill="#777"/></svg>
<svg style="left:989px;top:703px" width="13" height="13" viewBox="0 0 13 13"><rect x="0" y="0" width="13" height="13" fill="#666"/><rect x="1" y="1" width="3" height="3" fill="#ccc"/><rect x="1" y="5" width="3" height="3" fill="#ccc"/><rect x="1" y="9" width="3" height="3" fill="#ccc"/><rect x="5" y="1" width="3" height="3" fill="#ccc"/><rect x="5" y="5" width="3" height="3" fill="#ccc"/><rect x="5" y="9" width="3" height="3" fill="#ccc"/><rect x="9" y="1" width="3" height="3" fill="#ccc"/><rect x="9" y="5" width="3" height="3" fill="#ccc"/><rect x="9" y="9" width="3" height="3" fill="#ccc"/></svg>
<svg style="left:1027px;top:703px" width="14" height="13" viewBox="0 0 14 13"><rect x="0.5" y="0.5" width="13" height="12" fill="none" stroke="#666"/><rect x="3" y="3" width="8" height="7" fill="none" stroke="#666"/><path d="M4.5 5h5 M4.5 7h5 M4.5 9h5" stroke="#666" stroke-width="0.8"/></svg>
<svg style="left:1065px;top:703px" width="14" height="13" viewBox="0 0 14 13"><path d="M0.5 0.5h13v12h-13z M0.5 7.5h6v-7 M4 0.5v7" fill="none" stroke="#666"/></svg>
<svg style="left:1096px;top:708px" width="7" height="3" viewBox="0 0 7 3"><rect x="0" y="0" width="6" height="2" fill="#666"/></svg>
<svg style="left:1106px;top:709px" width="100" height="1" viewBox="0 0 100 1"><rect x="0" y="0" width="100" height="1" fill="#999"/></svg>
<svg style="left:1154px;top:704px" width="4" height="11" viewBox="0 0 4 11"><rect x="0" y="0" width="4" height="11" fill="#666"/></svg>
<svg style="left:1210px;top:705px" width="9" height="9" viewBox="0 0 9 9"><path d="M4.25 0v8.5 M0 4.25h8.5" stroke="#666" stroke-width="1.8"/></svg>
<div class="dlg">
<div class="r" style="left:507px;top:216px;width:347px;height:315px;background:#8cb0c3;border:1px solid #6f95a9;box-sizing:border-box;"></div>
<div class="r" style="left:514px;top:246px;width:334px;height:278px;background:#f0f0f0;border:1px solid #6f95a9;box-sizing:border-box;"></div>
<div class="r" style="left:515px;top:247px;width:332px;height:1px;background:#fcfcfc;"></div>
<div class="r" style="left:515px;top:247px;width:1px;height:276px;background:#fcfcfc;"></div>
<div class="t" id="t90" style="left:634.10px;top:223.70px;font-size:15px;line-height:15px;color:#1e2d36;transform:scaleX(0.9459);-webkit-text-stroke:0;">Защита листа</div>
<div class="t" id="t91" style="left:785.00px;top:221.00px;font-size:13px;line-height:13px;color:#222;font-weight:700;transform:scaleX(0.8449);">?</div>
<div class="r" style="left:802px;top:217px;width:45px;height:20px;background:#c75050;"></div>
<svg style="left:820px;top:223px" width="10" height="10" viewBox="0 0 10 10"><path d="M1 1l8 8 M9 1l-8 8" stroke="#fff" stroke-width="1.5"/></svg>
<svg style="left:521px;top:255px" width="13" height="13" viewBox="0 0 13 13"><rect x="0.5" y="0.5" width="12" height="12" fill="#fff" stroke="#555" stroke-width="1"/><path d="M2.5 6.5l2.8 3.2 5-7" fill="none" stroke="#111" stroke-width="2"/></svg>
<div class="t" id="t92" style="left:537.90px;top:256.79px;font-size:11px;line-height:11px;color:#000000;transform:scaleX(1.0329);">Защитить лист и содержимое защищаемых ячеек</div>
<div class="r" style="left:628px;top:268px;width:6px;height:1px;background:#000000;"></div>
<div class="t" id="t93" style="left:521.20px;top:279.69px;font-size:11px;line-height:11px;color:#000000;transform:scaleX(1.0338);">Пароль для отключения защиты листа:</div>
<div class="r" style="left:521px;top:290px;width:8px;height:1px;background:#000000;"></div>
<div class="r" style="left:521px;top:294px;width:319px;height:20px;background:#fff;border:1px solid #a8a8a8;box-sizing:border-box;"></div>
<div class="t" id="t94" style="left:521.50px;top:323.29px;font-size:11px;line-height:11px;color:#000000;transform:scaleX(1.0258);">Разрешить всем пользователям этого листа:</div>
<div class="r" style="left:551px;top:334px;width:9px;height:1px;background:#000000;"></div>
<div class="r" style="left:521px;top:338px;width:319px;height:144px;background:#fff;border:1px solid #828282;box-sizing:border-box;"></div>
<div class="r" style="left:538px;top:340px;width:283px;height:14px;background:#3399ff;"></div>
<svg style="left:524px;top:340px" width="13" height="13" viewBox="0 0 13 13"><rect x="0.5" y="0.5" width="12" height="12" fill="#fff" stroke="#555" stroke-width="1"/><path d="M2.5 6.5l2.8 3.2 5-7" fill="none" stroke="#111" stroke-width="2"/></svg>
<div class="t" id="t95" style="left:540.70px;top:341.89px;font-size:11px;line-height:11px;color:#fff;transform:scaleX(1.0533);">выделение заблокированных ячеек</div>
<svg style="left:524px;top:354px" width="13" height="13" viewBox="0 0 13 13"><rect x="0.5" y="0.5" width="12" height="12" fill="#fff" stroke="#555" stroke-width="1"/><path d="M2.5 6.5l2.8 3.2 5-7" fill="none" stroke="#111" stroke-width="2"/></svg>
<div class="t" id="t96" style="left:540.70px;top:355.89px;font-size:11px;line-height:11px;color:#000000;transform:scaleX(1.0533);">выделение незаблокированных ячеек</div>
<svg style="left:524px;top:368px" width="13" height="13" viewBox="0 0 13 13"><rect x="0.5" y="0.5" width="12" height="12" fill="#fff" stroke="#555" stroke-width="1"/></svg>
<div class="t" id="t97" style="left:540.70px;top:369.89px;font-size:11px;line-height:11px;color:#000000;transform:scaleX(1.0533);">форматирование ячеек</div>
<svg style="left:524px;top:382px" width="13" height="13" viewBox="0 0 13 13"><rect x="0.5" y="0.5" width="12" height="12" fill="#fff" stroke="#555" stroke-width="1"/></svg>
<div class="t" id="t98" style="left:540.70px;top:383.89px;font-size:11px;line-height:11px;color:#000000;transform:scaleX(1.0533);">форматирование столбцов</div>
<svg style="left:524px;top:396px" width="13" height="13" viewBox="0 0 13 13"><rect x="0.5" y="0.5" width="12" height="12" fill="#fff" stroke="#555" stroke-width="1"/></svg>
<div class="t" id="t99" style="left:540.70px;top:397.89px;font-size:11px;line-height:11px;color:#000000;transform:scaleX(1.0533);">форматирование строк</div>
<svg style="left:524px;top:410px" width="13" height="13" viewBox="0 0 13 13"><rect x="0.5" y="0.5" width="12" height="12" fill="#fff" stroke="#555" stroke-width="1"/></svg>
<div class="t" id="t100" style="left:540.70px;top:411.89px;font-size:11px;line-height:11px;color:#000000;transform:scaleX(1.0533);">вставку столбцов</div>
<svg style="left:524px;top:424px" width="13" height="13" viewBox="0 0 13 13"><rect x="0.5" y="0.5" width="12" height="12" fill="#fff" stroke="#555" stroke-width="1"/></svg>
<div class="t" id="t101" style="left:540.70px;top:425.89px;font-size:11px;line-height:11px;color:#000000;transform:scaleX(1.0533);">вставку строк</div>
<svg style="left:524px;top:438px" width="13" height="13" viewBox="0 0 13 13"><rect x="0.5" y="0.5" width="12" height="12" fill="#fff" stroke="#555" stroke-width="1"/></svg>
<div class="t" id="t102" style="left:540.70px;top:439.89px;font-size:11px;line-height:11px;color:#000000;transform:scaleX(1.0533);">вставку гиперссылок</div>
<svg style="left:524px;top:452px" width="13" height="13" viewBox="0 0 13 13"><rect x="0.5" y="0.5" width="12" height="12" fill="#fff" stroke="#555" stroke-width="1"/></svg>
<div class="t" id="t103" style="left:540.70px;top:453.89px;font-size:11px;line-height:11px;color:#000000;transform:scaleX(1.0533);">удаление столбцов</div>
<svg style="left:524px;top:466px" width="13" height="13" viewBox="0 0 13 13"><rect x="0.5" y="0.5" width="12" height="12" fill="#fff" stroke="#555" stroke-width="1"/></svg>
<div class="t" id="t104" style="left:540.70px;top:467.89px;font-size:11px;line-height:11px;color:#000000;transform:scaleX(1.0533);">удаление строк</div>
<svg style="left:822px;top:339px" width="17" height="142" viewBox="0 0 17 142"><rect x="0" y="0" width="17" height="142" fill="#f0f0f0"/><path d="M4.5 10.5l3.5-3.5 3.5 3.5" fill="none" stroke="#4d4d4d" stroke-width="1.9"/><rect x="0" y="18" width="15" height="71" fill="#cdcdcd"/><path d="M4.5 129.5l3.5 3.5 3.5-3.5" fill="none" stroke="#4d4d4d" stroke-width="1.9"/></svg>
<div class="r" style="left:681px;top:493px;width:74px;height:22px;background:#e1e1e1;border:1px solid #3795f0;box-sizing:border-box;background:linear-gradient(#f2f2f2,#e8e8e8);"></div>
<div class="r" style="left:765px;top:493px;width:74px;height:22px;background:#e1e1e1;border:1px solid #acacac;box-sizing:border-box;background:linear-gradient(#f2f2f2,#e8e8e8);"></div>
<div class="t" id="t105" style="left:710.40px;top:498.69px;font-size:11px;line-height:11px;color:#000000;transform:scaleX(0.9185);">OK</div>
<div class="t" id="t106" style="left:781.40px;top:498.69px;font-size:11px;line-height:11px;color:#000000;transform:scaleX(1.0230);">Отмена</div>
</div>
<svg style="left:0;top:0" width="1283" height="721" viewBox="0 0 1283 721"><defs><filter id="bl" x="-5%" y="-20%" width="110%" height="140%"><feGaussianBlur stdDeviation="0.6"/></filter></defs><path d="M846.9 649.7 L851.0 649.7 L865.2 658.7 L879.4 645.5 L885.7 644.9 L885.7 681.6 L879.4 681.6 L878.4 653.2 L865.6 666.4 L852.4 657.3 L852.7 682.3 L846.9 683.3 Z M887.5 650.1 L927.0 645.2 L927.0 654.2 L922.1 654.9 L922.1 651.4 L891.6 654.9 L891.6 660.5 L925.6 659.8 L925.6 678.8 L888.5 682.3 L888.5 673.3 L893.0 673.3 L893.0 676.4 L920.8 672.9 L920.8 666.4 L887.5 666.0 Z M929.5 663.7 L944.3 660.8 L945.2 683.5 L930.9 684.6 Z M934.0 668.5 L934.0 677.0 L940.6 676.8 L940.6 668.0 Z M946.5 656.3 L962.8 654.2 L962.8 657.7 L951.5 660.5 L951.8 669.5 L957.6 669.5 L957.6 676.5 L952.3 676.5 L954.5 692.5 L950.0 692.8 L947.0 662.2 Z M964.6 656.3 L980.5 654.0 L980.5 657.5 L969.5 660.5 L969.8 669.5 L975.7 669.5 L975.7 676.5 L970.3 676.5 L972.3 692.5 L967.8 692.8 L965.0 662.2 Z M982.3 656.5 L986.8 656.0 L987.0 662.0 L982.6 662.2 Z M983.8 663.2 L988.3 663.0 L988.8 683.5 L984.3 683.7 Z M990.5 662.5 L1006.6 660.5 L1006.6 668.9 L996.7 669.5 L996.7 676.3 L1006.8 675.8 L1006.8 683.0 L991.5 683.5 Z M1009.0 662.3 L1025.2 660.3 L1025.2 673.0 L1014.0 673.3 L1014.0 676.2 L1025.3 676.0 L1025.3 683.0 L1009.8 683.4 Z M1013.9 665.3 L1013.9 669.4 L1020.0 669.2 L1020.0 665.0 Z M1026.0 663.0 L1049.0 658.3 L1049.0 665.5 L1026.0 668.3 Z M1049.2 650.4 L1089.0 644.9 L1089.0 665.7 L1055.4 670.2 L1055.7 682.3 L1049.5 683.0 Z M1053.7 654.6 L1054.4 665.0 L1083.5 660.8 L1083.5 651.1 Z M1091.5 660.8 L1096.5 660.5 L1096.8 663.5 L1106.7 660.5 L1106.7 668.1 L1097.2 667.2 L1098.4 683.3 L1093.5 683.7 Z M1109.8 662.0 L1125.6 660.5 L1125.6 683.3 L1110.6 683.6 Z M1114.4 668.6 L1114.4 677.0 L1121.0 677.0 L1121.0 668.6 Z M1127.3 663.3 L1133.0 662.8 L1133.5 676.0 L1138.9 671.5 L1143.5 676.0 L1143.5 660.0 L1148.4 659.5 L1148.4 683.0 L1143.3 683.2 L1138.9 678.5 L1133.5 683.5 L1127.8 683.7 Z M1150.1 662.0 L1166.3 660.5 L1166.3 683.3 L1150.9 683.6 Z M1154.7 668.6 L1154.7 677.0 L1161.5 677.0 L1161.5 668.6 Z M1168.4 660.8 L1173.4 660.5 L1173.7 663.5 L1183.6 660.5 L1183.6 668.1 L1174.1 667.2 L1175.3 683.3 L1170.4 683.7 Z M1185.6 656.1 L1190.7 655.4 L1191.2 668.5 L1195.6 658.3 L1199.6 661.3 L1193.5 671.5 L1202.6 682.8 L1197.8 683.4 L1192.2 675.5 L1193.0 683.0 L1188.5 683.1 Z M1204.4 672.8 L1210.0 672.4 L1210.0 676.9 L1204.4 677.0 Z M1211.9 663.5 L1227.4 660.2 L1227.4 667.6 L1217.8 669.1 L1218.1 677.2 L1228.5 676.1 L1228.5 682.8 L1214.4 683.5 Z M1230.0 662.4 L1245.6 660.2 L1245.6 683.1 L1231.9 683.5 Z M1235.9 669.1 L1235.9 676.9 L1241.5 676.9 L1241.5 669.1 Z M1247.0 657.2 L1251.9 656.1 L1258.2 661.8 L1264.0 653.6 L1268.5 653.1 L1268.9 682.8 L1264.4 683.0 L1263.7 661.3 L1258.5 666.5 L1253.3 663.1 L1254.0 683.5 L1250.7 683.5 Z" fill="#1a1a1a" fill-rule="evenodd" transform="translate(-0.9,1.2)" filter="url(#bl)"/><path d="M846.9 649.7 L851.0 649.7 L865.2 658.7 L879.4 645.5 L885.7 644.9 L885.7 681.6 L879.4 681.6 L878.4 653.2 L865.6 666.4 L852.4 657.3 L852.7 682.3 L846.9 683.3 Z M887.5 650.1 L927.0 645.2 L927.0 654.2 L922.1 654.9 L922.1 651.4 L891.6 654.9 L891.6 660.5 L925.6 659.8 L925.6 678.8 L888.5 682.3 L888.5 673.3 L893.0 673.3 L893.0 676.4 L920.8 672.9 L920.8 666.4 L887.5 666.0 Z M929.5 663.7 L944.3 660.8 L945.2 683.5 L930.9 684.6 Z M934.0 668.5 L934.0 677.0 L940.6 676.8 L940.6 668.0 Z M946.5 656.3 L962.8 654.2 L962.8 657.7 L951.5 660.5 L951.8 669.5 L957.6 669.5 L957.6 676.5 L952.3 676.5 L954.5 692.5 L950.0 692.8 L947.0 662.2 Z M964.6 656.3 L980.5 654.0 L980.5 657.5 L969.5 660.5 L969.8 669.5 L975.7 669.5 L975.7 676.5 L970.3 676.5 L972.3 692.5 L967.8 692.8 L965.0 662.2 Z M982.3 656.5 L986.8 656.0 L987.0 662.0 L982.6 662.2 Z M983.8 663.2 L988.3 663.0 L988.8 683.5 L984.3 683.7 Z M990.5 662.5 L1006.6 660.5 L1006.6 668.9 L996.7 669.5 L996.7 676.3 L1006.8 675.8 L1006.8 683.0 L991.5 683.5 Z M1009.0 662.3 L1025.2 660.3 L1025.2 673.0 L1014.0 673.3 L1014.0 676.2 L1025.3 676.0 L1025.3 683.0 L1009.8 683.4 Z M1013.9 665.3 L1013.9 669.4 L1020.0 669.2 L1020.0 665.0 Z M1026.0 663.0 L1049.0 658.3 L1049.0 665.5 L1026.0 668.3 Z M1049.2 650.4 L1089.0 644.9 L1089.0 665.7 L1055.4 670.2 L1055.7 682.3 L1049.5 683.0 Z M1053.7 654.6 L1054.4 665.0 L1083.5 660.8 L1083.5 651.1 Z M1091.5 660.8 L1096.5 660.5 L1096.8 663.5 L1106.7 660.5 L1106.7 668.1 L1097.2 667.2 L1098.4 683.3 L1093.5 683.7 Z M1109.8 662.0 L1125.6 660.5 L1125.6 683.3 L1110.6 683.6 Z M1114.4 668.6 L1114.4 677.0 L1121.0 677.0 L1121.0 668.6 Z M1127.3 663.3 L1133.0 662.8 L1133.5 676.0 L1138.9 671.5 L1143.5 676.0 L1143.5 660.0 L1148.4 659.5 L1148.4 683.0 L1143.3 683.2 L1138.9 678.5 L1133.5 683.5 L1127.8 683.7 Z M1150.1 662.0 L1166.3 660.5 L1166.3 683.3 L1150.9 683.6 Z M1154.7 668.6 L1154.7 677.0 L1161.5 677.0 L1161.5 668.6 Z M1168.4 660.8 L1173.4 660.5 L1173.7 663.5 L1183.6 660.5 L1183.6 668.1 L1174.1 667.2 L1175.3 683.3 L1170.4 683.7 Z M1185.6 656.1 L1190.7 655.4 L1191.2 668.5 L1195.6 658.3 L1199.6 661.3 L1193.5 671.5 L1202.6 682.8 L1197.8 683.4 L1192.2 675.5 L1193.0 683.0 L1188.5 683.1 Z M1204.4 672.8 L1210.0 672.4 L1210.0 676.9 L1204.4 677.0 Z M1211.9 663.5 L1227.4 660.2 L1227.4 667.6 L1217.8 669.1 L1218.1 677.2 L1228.5 676.1 L1228.5 682.8 L1214.4 683.5 Z M1230.0 662.4 L1245.6 660.2 L1245.6 683.1 L1231.9 683.5 Z M1235.9 669.1 L1235.9 676.9 L1241.5 676.9 L1241.5 669.1 Z M1247.0 657.2 L1251.9 656.1 L1258.2 661.8 L1264.0 653.6 L1268.5 653.1 L1268.9 682.8 L1264.4 683.0 L1263.7 661.3 L1258.5 666.5 L1253.3 663.1 L1254.0 683.5 L1250.7 683.5 Z" fill="#be5d4f" fill-rule="evenodd"/></svg>
</body></html>
